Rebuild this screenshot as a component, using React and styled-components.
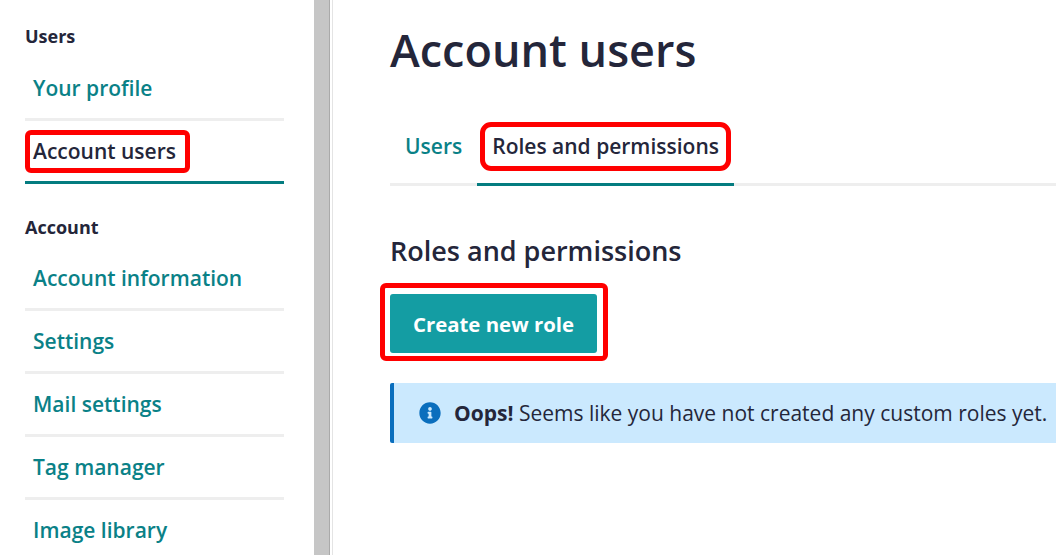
import React from 'react';
import styled, { createGlobalStyle } from 'styled-components';
import { FaInfoCircle } from 'react-icons/fa';

const sections = [
  {
    title: 'Users',
    links: [
      { label: 'Your profile' },
      { label: 'Account users', active: true, marked: true },
    ],
  },
  {
    title: 'Account',
    links: [
      { label: 'Account information' },
      { label: 'Settings' },
      { label: 'Mail settings' },
      { label: 'Tag manager' },
      { label: 'Image library' },
    ],
  },
];

function App() {
  return (
    <>
      <GlobalStyle />
      <Page>
        <Sidebar>
          {sections.map((section) => (
            <Section key={section.title}>
              <SectionTitle>{section.title}</SectionTitle>
              {section.links.map((link) => (
                <NavItem key={link.label} $active={link.active}>
                  <NavLink $active={link.active} $marked={link.marked}>{link.label}</NavLink>
                </NavItem>
              ))}
            </Section>
          ))}
        </Sidebar>
        <Divider />
        <Main>
          <Title>Account users</Title>
          <Tabs>
            <Tab>Users</Tab>
            <Tab $active>
              <TabLabel>Roles and permissions</TabLabel>
            </Tab>
          </Tabs>
          <Heading>Roles and permissions</Heading>
          <ButtonMark>
            <CreateButton>Create new role</CreateButton>
          </ButtonMark>
          <Notice>
            <FaInfoCircle size={22} color="#0a6ebd" />
            <NoticeText><strong>Oops!</strong> Seems like you have not created any custom roles yet.</NoticeText>
          </Notice>
        </Main>
      </Page>
    </>
  );
}

const GlobalStyle = createGlobalStyle`
  html, body {
    margin: 0;
    height: 100%;
    overflow: hidden;
    background: #fff;
  }
  body {
    font-family: "Open Sans", "Noto Sans", sans-serif;
    color: #24263a;
  }
`;
const Page = styled.div`
  display: flex;
  width: 1056px;
  height: 555px;
  overflow: hidden;
`;
const Sidebar = styled.nav`
  width: 259px;
  flex: none;
  padding: 27px 30px 0 25px;
`;
const Section = styled.div`
  margin-bottom: 34px;
`;
const SectionTitle = styled.div`
  font-size: 18px;
  font-weight: 700;
  line-height: 18px;
  margin-bottom: 13px;
  ${Section}:last-child & {
    margin-bottom: 12px;
  }
`;
const NavItem = styled.div`
  height: 60px;
  display: flex;
  align-items: center;
  border-bottom: 3px solid ${(p) => (p.$active ? '#047c80' : '#eeeeee')};
`;
const NavLink = styled.a`
  font-size: 21px;
  font-weight: 600;
  line-height: 29px;
  color: ${(p) => (p.$active ? '#24263a' : '#0a8187')};
  padding: ${(p) => (p.$marked ? '2px 9px 2px 3px' : '3px 8px')};
  border: ${(p) => (p.$marked ? '5px solid #ff0000' : 'none')};
  border-radius: 6px;
`;
const Divider = styled.div`
  width: 15px;
  flex: none;
  background: #c6c6c6;
  border-right: 1px solid #aaaaaa;
  box-shadow: 2px 0 0 #fff, 3px 0 0 #e4e4e4;
`;
const Main = styled.main`
  flex: 1;
  min-width: 0;
  padding: 21px 0 0 60px;
  display: flex;
  flex-direction: column;
  align-items: flex-start;
`;
const Title = styled.h1`
  margin: 0;
  font-size: 45px;
  font-weight: 600;
  line-height: 58px;
  white-space: nowrap;
`;
const Tabs = styled.div`
  align-self: stretch;
  display: flex;
  margin-top: 33px;
  height: 71px;
  border-bottom: 3px solid #eeeeee;
`;
const Tab = styled.div`
  display: flex;
  align-items: center;
  height: 68px;
  padding: 0 15px 3px;
  font-size: 21px;
  font-weight: 600;
  white-space: nowrap;
  color: ${(p) => (p.$active ? '#24263a' : '#0a8187')};
  border-bottom: 3px solid ${(p) => (p.$active ? '#047c80' : 'transparent')};
`;
const TabLabel = styled.span`
  line-height: 29px;
  padding: 5px 7px;
  margin: 0 -7px;
  border-radius: 6px;
  outline: 5px solid #ff0000;
`;
const Heading = styled.h2`
  margin: 48px 0 0;
  font-size: 27px;
  font-weight: 600;
  line-height: 34px;
  white-space: nowrap;
`;
const ButtonMark = styled.div`
  margin: 15px 0 0 -10px;
  padding: 6px 6px 3px 5px;
  border: 5px solid #ff0000;
  border-radius: 6px;
  display: flex;
`;
const CreateButton = styled.button`
  width: 207px;
  height: 59px;
  border: none;
  border-radius: 3px;
  background: #149da3;
  color: #fff;
  font-family: inherit;
  font-size: 20.4px;
  font-weight: 700;
`;
const Notice = styled.div`
  align-self: stretch;
  display: flex;
  align-items: center;
  gap: 13px;
  height: 60px;
  margin-top: 22px;
  padding-left: 25px;
  background: #cbe9fe;
  border-left: 4px solid #0a6ebd;
  border-radius: 2px 0 0 2px;
  white-space: nowrap;
`;
const NoticeText = styled.span`
  font-size: 21px;
  color: #24263a;
  strong { font-weight: 700; }
`;

export default App
